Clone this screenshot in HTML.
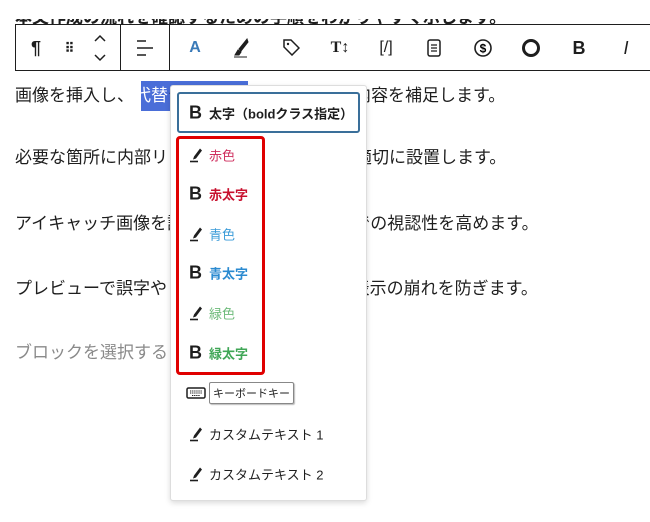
<!DOCTYPE html>
<html><head><meta charset="utf-8"><style>
*{margin:0;padding:0;box-sizing:border-box}
body{width:650px;height:522px;background:#fff;position:relative;overflow:hidden;font-family:"Liberation Sans","Noto Sans CJK JP",sans-serif;color:#1e1e1e}
.p{position:absolute;left:15px;font-size:17px;white-space:nowrap;line-height:24px}
.tb{position:absolute;left:15px;top:24px;width:650px;height:47px;border:1px solid #1e1e1e;background:#fff}
.sep{position:absolute;top:0;width:1px;height:45px;background:#1e1e1e}
.ic{position:absolute;top:23px;transform:translate(-50%,-50%);font-size:17px;font-weight:bold;line-height:1}
.pop{position:absolute;left:170px;top:85px;width:197px;height:416px;background:#fff;border:1px solid #ddd;border-radius:3px;box-shadow:0 2px 6px rgba(0,0,0,.15)}
.it{position:absolute;left:189px;transform:translateY(-50%);font-size:13px;white-space:nowrap;display:flex;align-items:center;font-weight:bold}
.it b.B{font-size:18px;color:#1e1e1e;margin-right:6px;width:14px;display:inline-block}
.pen{width:14px;margin-right:6px;display:inline-block}
</style></head><body>
<div class="p" style="top:6px;font-weight:bold">本文作成の流れを確認するための手順をわかりやすく示します。</div>
<div style="position:absolute;left:0;top:0;width:650px;height:19px;background:#fff"></div>
<div class="tb">
<div class="sep" style="left:104px"></div><div class="sep" style="left:153px"></div>
<div class="ic" style="left:20px;font-size:18px">¶</div>
<div class="ic" style="left:53px;font-size:13px;letter-spacing:-1px">⠿</div>
<svg style="position:absolute;left:77px;top:9px" width="14" height="28"><path d="M2 7l5-5 5 5M2 21l5 5 5-5" fill="none" stroke="#1e1e1e" stroke-width="1.5"/></svg>
<svg style="position:absolute;left:121px;top:14px" width="16" height="18"><path d="M0 2h9M0 9h16M0 16h9" stroke="#1e1e1e" stroke-width="1.5"/></svg>
<div class="ic" style="left:179px;color:#3a7ab8;font-size:16px">A</div>
<svg style="position:absolute;left:217px;top:13px" width="16" height="20"><path d="M14 1L6 11l2 2 7-9zM5 12l-3 5h4l2-3zM1 19h13" fill="#1e1e1e" stroke="#1e1e1e" stroke-width="1"/></svg>
<svg style="position:absolute;left:266px;top:13px" width="18" height="18"><path d="M2 2h7l8 8-7 7-8-8z" fill="none" stroke="#1e1e1e" stroke-width="1.5"/><circle cx="6" cy="6" r="1.2" fill="#1e1e1e"/></svg>
<div class="ic" style="left:324px;font-family:'Liberation Serif',serif;font-size:16px">T↕</div>
<div class="ic" style="left:370px;font-weight:normal;font-size:16px">[/]</div>
<svg style="position:absolute;left:411px;top:14px" width="14" height="18"><rect x="1" y="1" width="12" height="16" rx="2" fill="none" stroke="#1e1e1e" stroke-width="1.5"/><path d="M4 6h6M4 9h6M4 12h6" stroke="#1e1e1e" stroke-width="1.3"/></svg>
<svg style="position:absolute;left:457px;top:13px" width="20" height="20"><circle cx="10" cy="10" r="8" fill="none" stroke="#1e1e1e" stroke-width="1.6"/><text x="10" y="14.5" font-size="12" text-anchor="middle" font-family="Liberation Sans" font-weight="bold">$</text></svg>
<svg style="position:absolute;left:505px;top:13px" width="20" height="20"><circle cx="10" cy="10" r="7.5" fill="none" stroke="#1e1e1e" stroke-width="3"/></svg>
<div class="ic" style="left:563px;font-size:18px">B</div>
<div class="ic" style="left:610px;font-style:italic;font-weight:normal;font-size:18px">I</div>
</div>
<div style="position:absolute;left:141px;top:81px;width:107px;height:30px;background:#4a6ed8"></div>
<div class="p" style="top:84px">画像を挿入し、<span style="color:#fff">代替</span>テキストを設定して画像内容を補足します。</div>
<div class="p" style="top:146px">必要な箇所に内部リンクや関連記事リンクを適切に設置します。</div>
<div class="p" style="top:212px">アイキャッチ画像を設定してトップページ上での視認性を高めます。</div>
<div class="p" style="top:277px">プレビューで誤字やレイアウトを確認して、表示の崩れを防ぎます。</div>
<div class="p" style="top:341px;color:#8a8a8a">ブロックを選択するには「/」を入力</div>
<div class="pop"></div>
<div style="position:absolute;left:177px;top:92px;width:183px;height:41px;border:2px solid #3a6f9a;border-radius:3px"></div>
<div style="position:absolute;left:176px;top:136px;width:89px;height:239px;border:3px solid #e00000;border-radius:4px"></div>
<svg width="0" height="0" style="position:absolute"><defs><g id="pn"><path d="M11 1l2 2-6 8-3 1 1-3z" fill="#1e1e1e"/><path d="M1 14h8" stroke="#1e1e1e" stroke-width="1.6"/></g></defs></svg>
<div class="it" style="top:113px"><b class="B">B</b><span>太字（boldクラス指定）</span></div>
<div class="it" style="top:155px;font-weight:normal;color:#cf2e5e"><svg class="pen" width="14" height="15"><use href="#pn"/></svg>赤色</div>
<div class="it" style="top:194px;color:#c8102e"><b class="B">B</b>赤太字</div>
<div class="it" style="top:234px;font-weight:normal;color:#3a9bd8"><svg class="pen" width="14" height="15"><use href="#pn"/></svg>青色</div>
<div class="it" style="top:273px;color:#2a8ad0"><b class="B">B</b>青太字</div>
<div class="it" style="top:313px;font-weight:normal;color:#6dbb7a"><svg class="pen" width="14" height="15"><use href="#pn"/></svg>緑色</div>
<div class="it" style="top:353px;color:#3fa656"><b class="B">B</b>緑太字</div>
<div class="it" style="top:393px;left:186px;font-weight:normal"><svg width="20" height="12" style="margin-right:3px"><rect x="1" y="1" width="18" height="10" rx="1.5" fill="none" stroke="#1e1e1e" stroke-width="1.5"/><path d="M4 4h12M4 6h12M6 8.5h8" stroke="#1e1e1e" stroke-width="1" stroke-dasharray="1.3 0.8"/></svg><span style="border:1px solid #888;border-radius:2px;padding:2px 3px;font-size:11px;box-shadow:1px 1px 1px #bbb">キーボードキー</span></div>
<div class="it" style="top:434px;font-weight:normal"><svg class="pen" width="14" height="15"><use href="#pn"/></svg>カスタムテキスト 1</div>
<div class="it" style="top:474px;font-weight:normal"><svg class="pen" width="14" height="15"><use href="#pn"/></svg>カスタムテキスト 2</div>
</body></html>
